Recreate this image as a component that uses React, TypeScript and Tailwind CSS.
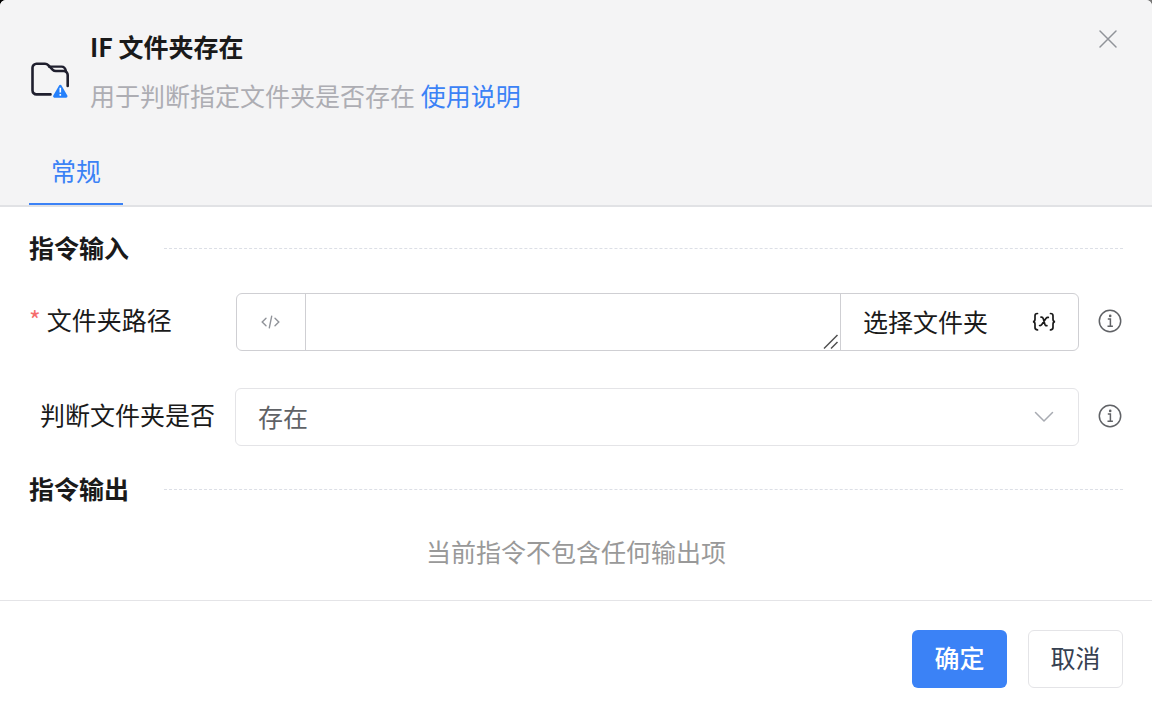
import { useState } from 'react';
import type { ReactNode } from 'react';

function FolderIcon() {
  return (
    <svg className="h-9 w-10 shrink-0" viewBox="0 0 40 36" fill="none" aria-hidden="true">
      <path
        d="M20.500 32.400H6.500a4 4 0 0 1-4-4V5.800a4 4 0 0 1 4-4h8.500c1.400 0 2.300.4 3.200 1.300L22.800 7.800c.9.900 1.700 1.200 3 1.200H33.500a4 4 0 0 1 4.200 4V24"
        stroke="#1f1f2e"
        strokeWidth="2.600"
        strokeLinecap="round"
        strokeLinejoin="round"
      />
      <path d="M19 4.600h12.500c2.600 0 4 1.800 4.600 5" stroke="#1f1f2e" strokeWidth="2.400" strokeLinecap="round" />
      <path d="M30.300 24.300 24.500 34.300h11.600z" fill="#2580fb" stroke="#2580fb" strokeWidth="2.800" strokeLinejoin="round" />
      <path d="M30.300 25.800v4.600M30.300 32v1.800" stroke="#fff" strokeWidth="1.600" />
    </svg>
  );
}

function CloseIcon() {
  return (
    <svg className="h-5 w-5" viewBox="0 0 20 20" fill="none" stroke="#909399" strokeWidth="1.500" strokeLinecap="round" aria-hidden="true">
      <path d="M2 2l16 16M18 2L2 18" />
    </svg>
  );
}

function CodeIcon() {
  return (
    <svg className="h-5 w-5" viewBox="0 0 20 20" fill="none" stroke="#909399" strokeWidth="1.400" strokeLinecap="round" aria-hidden="true">
      <path d="M5 6.200 1.200 10 5 13.800M14 6.200 17.800 10 14 13.800M10.700 4.200 8.300 15.800" />
    </svg>
  );
}

function VariableIcon() {
  return (
    <svg className="h-5 w-6" viewBox="0 0 24 20" fill="none" stroke="#1a1a1a" strokeWidth="1.700" strokeLinecap="round" aria-hidden="true">
      <path d="M5.500 1.500c-2 0-2.500.8-2.500 2.300v3.400c0 1.500-.6 2.300-2 2.500 1.400.2 2 1 2 2.500v3.400c0 1.500.5 2.300 2.500 2.300" />
      <path d="M18.500 1.500c2 0 2.500.8 2.500 2.300v3.400c0 1.500.6 2.300 2 2.500-1.400.2-2 1-2 2.500v3.400c0 1.500-.5 2.300-2.500 2.300" />
      <path d="M9 5.200c1.400-.2 1.900.3 2.300 1.600l1.600 5.600c.3 1.200.9 1.500 2 1.200M16.300 5.400c-.9-.3-1.500 0-2.200.9l-4.300 6.200c-.7 1-1.200 1.300-2.200 1" />
    </svg>
  );
}

function InfoIcon() {
  return (
    <svg className="h-6 w-6" viewBox="0 0 24 24" fill="none" stroke="#606266" strokeWidth="1.500" aria-hidden="true">
      <circle cx="12" cy="12" r="10.700" />
      <path d="M9.800 10h2.600v7M9.500 17.200h5.400" />
      <circle cx="12.200" cy="6.900" r="1.300" fill="#606266" stroke="none" />
    </svg>
  );
}

function SectionTitle({ children }: { children: ReactNode }) {
  return (
    <div className="flex items-center gap-[35px]">
      <h2 className="pb-0.5 text-[25px] leading-[30px] font-bold">{children}</h2>
      <div className="flex-1 border-t border-dashed border-[#dcdfe6]" />
    </div>
  );
}

function InfoButton({ label }: { label: string }) {
  return (
    <button type="button" aria-label={label} className="mr-px ml-[19px] shrink-0 pb-[3px]">
      <InfoIcon />
    </button>
  );
}

export default function App() {
  const [path, setPath] = useState('');
  const [state, setState] = useState('exists');

  return (
    <div className="bg-linear-to-r from-black to-[#777777] font-['Noto_Sans_CJK_SC',sans-serif] text-[25px] text-[#1a1a1a]">
      <div role="dialog" aria-labelledby="dialog-title" className="min-h-screen rounded-t-md bg-white">
        <header className="rounded-t-md border-b-2 border-[#e1e2e5] bg-[#f4f4f5] px-[29px] pt-[26px]">
          <div className="flex items-center">
            <div className="pt-[18px] pl-px">
              <FolderIcon />
            </div>
            <div className="ml-5 flex-1">
              <h1 id="dialog-title" className="text-[25px] leading-10 font-bold">IF 文件夹存在</h1>
              <p className="mt-[9px] leading-10 text-[#adadb3]">
                用于判断指定文件夹是否存在{' '}
                <a href="#help" className="text-[#3b82f6]">使用说明</a>
              </p>
            </div>
            <button type="button" aria-label="关闭" className="mr-[5px] self-start pt-[3px]">
              <CloseIcon />
            </button>
          </div>
          <nav role="tablist" className="mt-[34px] flex">
            <button type="button" role="tab" aria-selected="true" className="border-b-2 border-[#3b82f6] px-[22px] pb-[11px] leading-[43px] text-[#3b82f6]">
              常规
            </button>
          </nav>
        </header>

        <form>
          <main className="px-[29px] pt-[25px] pb-[29px]">
            <SectionTitle>指令输入</SectionTitle>

            <div className="mt-[29px] flex items-center">
              <label htmlFor="folder-path" className="w-[207px] shrink-0 pb-1">
                <span className="mr-1.5 text-[#f56c6c]">*</span>文件夹路径
              </label>
              <div className="flex h-[58px] min-w-0 flex-1 rounded-md border border-[#cfcfd3]">
                <button type="button" aria-label="表达式" className="flex w-[69px] shrink-0 items-center justify-center border-r border-[#cfcfd3]">
                  <CodeIcon />
                </button>
                <div className="relative min-w-0 flex-1">
                  <textarea
                    id="folder-path"
                    rows={1}
                    value={path}
                    onChange={(e) => setPath(e.target.value)}
                    className="block h-full w-full resize-none px-3 py-2 outline-none"
                  />
                  <svg className="pointer-events-none absolute right-0 bottom-0 h-4 w-[18px]" viewBox="0 0 18 16" fill="none" stroke="#505050" strokeWidth="1.500" aria-hidden="true">
                    <path d="M2 14.500 15.500 1M9 14.500l6.500-6.500" />
                  </svg>
                </div>
                <button type="button" className="border-l border-[#cfcfd3] px-[22px]">选择文件夹</button>
                <button type="button" aria-label="变量" className="px-[22px]">
                  <VariableIcon />
                </button>
              </div>
              <InfoButton label="文件夹路径说明" />
            </div>

            <div className="mt-[37px] flex items-center">
              <label htmlFor="folder-state" className="w-[206px] shrink-0 pb-1 pl-[11px]">判断文件夹是否</label>
              <div className="relative min-w-0 flex-1">
                <select
                  id="folder-state"
                  value={state}
                  onChange={(e) => setState(e.target.value)}
                  className="block h-[58px] w-full appearance-none rounded-md border border-[#e4e4e7] bg-white px-[22px] text-[#606266]"
                >
                  <option value="exists">存在</option>
                  <option value="missing">不存在</option>
                </select>
                <svg className="pointer-events-none absolute top-[23px] right-[25px] h-3 w-5" viewBox="0 0 20 12" fill="none" stroke="#a8abb2" strokeWidth="1.500" strokeLinecap="round" strokeLinejoin="round" aria-hidden="true">
                  <path d="M1.500 1.500 10 10l8.500-8.500" />
                </svg>
              </div>
              <InfoButton label="判断条件说明" />
            </div>

            <div className="mt-[27px]">
              <SectionTitle>指令输出</SectionTitle>
            </div>
            <p className="mt-[26px] text-center leading-10 text-[#999999]">当前指令不包含任何输出项</p>
          </main>

          <footer className="flex justify-end gap-[21px] border-t border-[#e4e4e7] px-[29px] pt-[29px] pb-7">
            <button type="button" className="h-[58px] w-[95px] rounded-md bg-[#3b82f6] pb-0.5 font-medium text-white">确定</button>
            <button type="button" className="h-[58px] w-[95px] rounded-md border border-[#e4e4e7] bg-white pb-0.5 text-[#374151]">取消</button>
          </footer>
        </form>
      </div>
    </div>
  );
}
